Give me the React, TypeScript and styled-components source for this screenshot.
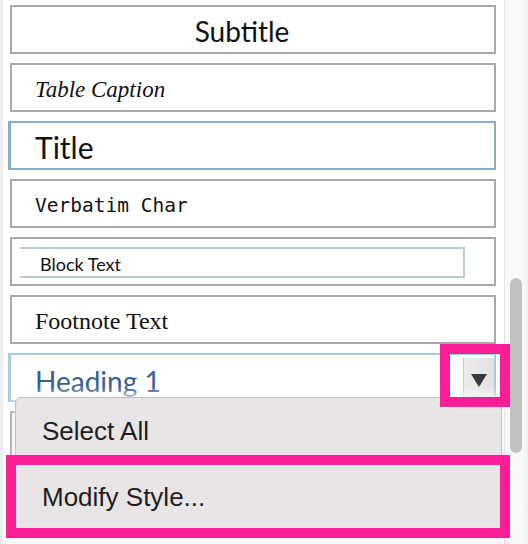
import React from 'react';
import styled, { createGlobalStyle, css } from 'styled-components';

const GlobalStyle = createGlobalStyle`
  html, body {
    margin: 0;
    padding: 0;
    background: #ffffff;
    overflow: hidden;
  }
  * { box-sizing: border-box; }
`;

type FontKind = 'sans' | 'serif' | 'italic' | 'mono';

const fonts: Record<FontKind, ReturnType<typeof css>> = {
  sans: css`
    font-family: Lato, 'Open Sans', sans-serif;
  `,
  serif: css`
    font-family: 'Liberation Serif', serif;
  `,
  italic: css`
    font-family: 'Liberation Serif', serif;
    font-style: italic;
  `,
  mono: css`
    font-family: 'DejaVu Sans Mono', 'Liberation Mono', monospace;
  `,
};

const Screen = styled.div`
  position: relative;
  width: 528px;
  height: 544px;
  display: flex;
  overflow: hidden;
  background: #ffffff;
`;

const StyleList = styled.div`
  flex: 1;
  display: flex;
  flex-direction: column;
  gap: 9px;
  padding: 5px 8px 0 7px;
  border-left: 3px solid #ededed;
`;

const StyleBox = styled.div<{ $selected?: boolean; $light?: boolean; $center?: boolean; $nudge?: number }>`
  position: relative;
  flex: 0 0 49px;
  display: flex;
  align-items: center;
  justify-content: ${(p) => (p.$center ? 'center' : 'flex-start')};
  padding: ${(p) => p.$nudge ?? 3}px ${(p) => (p.$center ? 45 : 0)}px 0 23px;
  background: #ffffff;
  border: 2px solid #a9a9a9;
  ${(p) =>
    p.$selected &&
    css`
      margin-left: -2px;
      border-color: ${p.$light ? '#a9cbe4' : '#8badc9'};
      border-left-width: 3px;
      padding-left: 24px;
    `}
`;

const Label = styled.span<{ $font: FontKind; $size: number; $color?: string }>`
  ${(p) => fonts[p.$font]};
  font-size: ${(p) => p.$size}px;
  color: ${(p) => p.$color ?? '#111111'};
  white-space: nowrap;
`;

const InnerFrame = styled.div`
  flex: 0 0 445px;
  height: 31px;
  margin-left: -15px;
  margin-top: 2px;
  display: flex;
  align-items: center;
  padding: 2px 0 0 20px;
  border: 2px solid #bccbd9;
  border-left: none;
`;

const DropButton = styled.div`
  margin-left: auto;
  align-self: stretch;
  width: 31px;
  margin-top: -3px;
  display: flex;
  align-items: center;
  justify-content: center;
  background: linear-gradient(to right, #ececec, #e2e2e2);
  border-left: 1px solid #c9c9c9;
`;

const Triangle = styled.span`
  width: 0;
  height: 0;
  margin-top: 2px;
  margin-left: -1px;
  border-left: 8px solid transparent;
  border-right: 8px solid transparent;
  border-top: 13px solid #3a3a3a;
`;

const ScrollTrack = styled.div`
  flex: 0 0 24px;
  padding: 278px 0 0 5px;
  background: linear-gradient(to right, #f7f7f7, #fbfbfb 70%, #efefef);
  border-left: 1px solid #e2e2e2;
`;

const Thumb = styled.div`
  width: 12px;
  height: 175px;
  border-radius: 6px;
  background: #c1c1c1;
`;

const Menu = styled.div`
  position: absolute;
  left: 15px;
  top: 397px;
  width: 487px;
  height: 138px;
  z-index: 2;
  background: #e9e5e7;
  border: 1px solid #c6c3c5;
  border-radius: 6px 6px 0 0;
  box-shadow: 0 -3px 10px rgba(255, 255, 255, 0.9), 0 2px 6px rgba(0, 0, 0, 0.12);
`;

const MenuItem = styled.div`
  height: 66px;
  line-height: 66px;
  padding-left: 26px;
  font-family: 'Liberation Sans', Arial, sans-serif;
  font-size: 26px;
  color: #1e1e1e;
`;

const Highlight = styled.div<{ $left: number; $top: number; $width: number; $height: number }>`
  position: absolute;
  left: ${(p) => p.$left}px;
  top: ${(p) => p.$top}px;
  width: ${(p) => p.$width}px;
  height: ${(p) => p.$height}px;
  z-index: 3;
  border: 10px solid #fd1d95;
`;

const App = () => {
  return (
    <>
      <GlobalStyle />
      <Screen>
        <StyleList>
          <StyleBox $center>
            <Label $font="sans" $size={28}>Subtitle</Label>
          </StyleBox>
          <StyleBox $nudge={4}>
            <Label $font="italic" $size={23}>Table Caption</Label>
          </StyleBox>
          <StyleBox $selected $nudge={2}>
            <Label $font="sans" $size={30}>Title</Label>
          </StyleBox>
          <StyleBox $nudge={3}>
            <Label $font="mono" $size={19.5}>Verbatim Char</Label>
          </StyleBox>
          <StyleBox $nudge={0}>
            <InnerFrame>
              <Label $font="sans" $size={18}>Block Text</Label>
            </InnerFrame>
          </StyleBox>
          <StyleBox $nudge={3}>
            <Label $font="serif" $size={24}>Footnote Text</Label>
          </StyleBox>
          <StyleBox $selected $light $nudge={6}>
            <Label $font="sans" $size={28} $color="#3a5f8e">Heading 1</Label>
            <DropButton>
              <Triangle />
            </DropButton>
          </StyleBox>
          <StyleBox />
          <StyleBox />
        </StyleList>
        <ScrollTrack>
          <Thumb />
        </ScrollTrack>

        <Menu>
          <MenuItem>Select All</MenuItem>
          <MenuItem>Modify Style...</MenuItem>
        </Menu>
        <Highlight $left={440} $top={344} $width={70} $height={63} />
        <Highlight $left={6} $top={455} $width={504} $height={83} />
      </Screen>
    </>
  );
};

export default App;
